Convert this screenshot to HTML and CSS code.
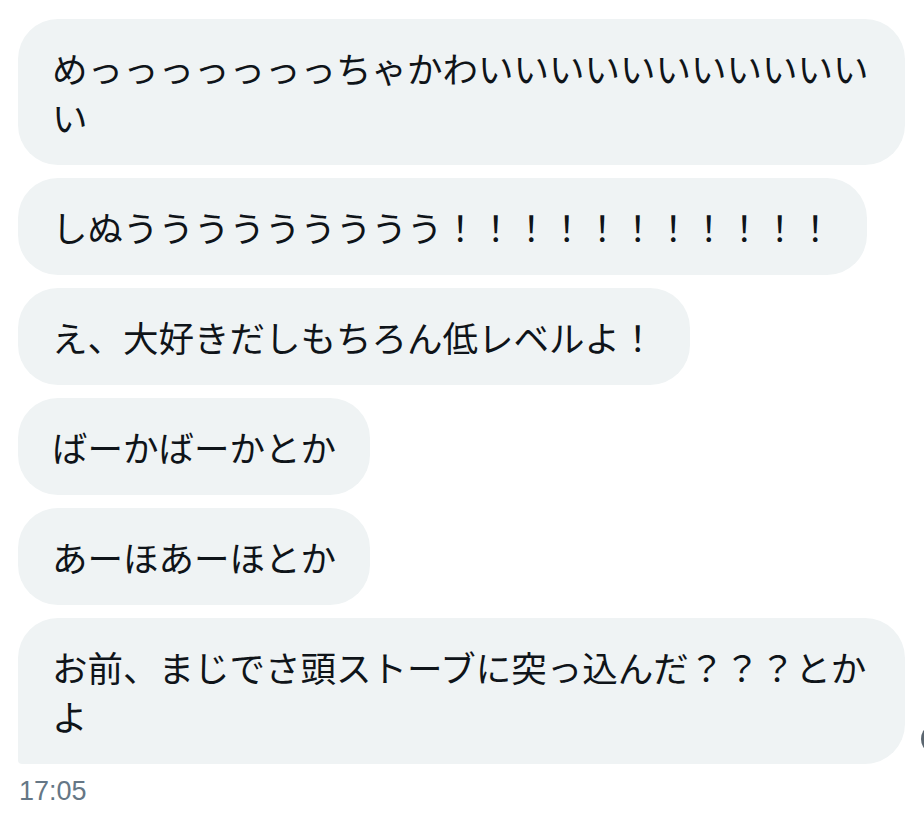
FILE: index.html
```html
<!DOCTYPE html>
<html lang="ja">
<head>
<meta charset="utf-8">
<title>DM</title>
<link rel="stylesheet" href="styles.css">
</head>
<body>
<div class="thread">
  <div class="bubble">めっっっっっっっちゃかわいいいいいいいいいいいい</div>
  <div class="bubble">しぬううううううううう！！！！！！！！！！！</div>
  <div class="bubble">え、大好きだしもちろん低レベルよ！</div>
  <div class="bubble">ばーかばーかとか</div>
  <div class="bubble">あーほあーほとか</div>
  <div class="bubble-row">
    <div class="bubble bubble-last">お前、まじでさ頭ストーブに突っ込んだ？？？とかよ</div>
    <span class="react-dot"></span>
  </div>
  <div class="time">17:05</div>
</div>
</body>
</html>
```
FILE: styles.css
```css
html, body {
  margin: 0;
  padding: 0;
  background: #ffffff;
  overflow: hidden;
}
.thread {
  display: flex;
  flex-direction: column;
  align-items: flex-start;
  gap: 13px;
  padding: 19px 0 0 18px;
  font-family: "Noto Sans CJK JP", "Noto Sans", sans-serif;
}
.bubble {
  box-sizing: border-box;
  max-width: 887px;
  padding: 24px 34px;
  background: #eff3f4;
  color: #0f1419;
  font-size: 35.5px;
  line-height: 49px;
  border-radius: 40px;
  word-break: break-all;
}
.bubble-row {
  position: relative;
  display: flex;
  align-items: flex-start;
}
.bubble-last {
  border-bottom-left-radius: 4px;
}
.react-dot {
  position: absolute;
  left: 903px;
  top: 110px;
  width: 14px;
  height: 22px;
  border-radius: 50%;
  background: #5b6670;
}
.time {
  margin-top: 1px;
  padding-left: 1px;
  font-family: "Liberation Sans", Arial, sans-serif;
  font-size: 27px;
  line-height: 26px;
  color: #657786;
}
```
